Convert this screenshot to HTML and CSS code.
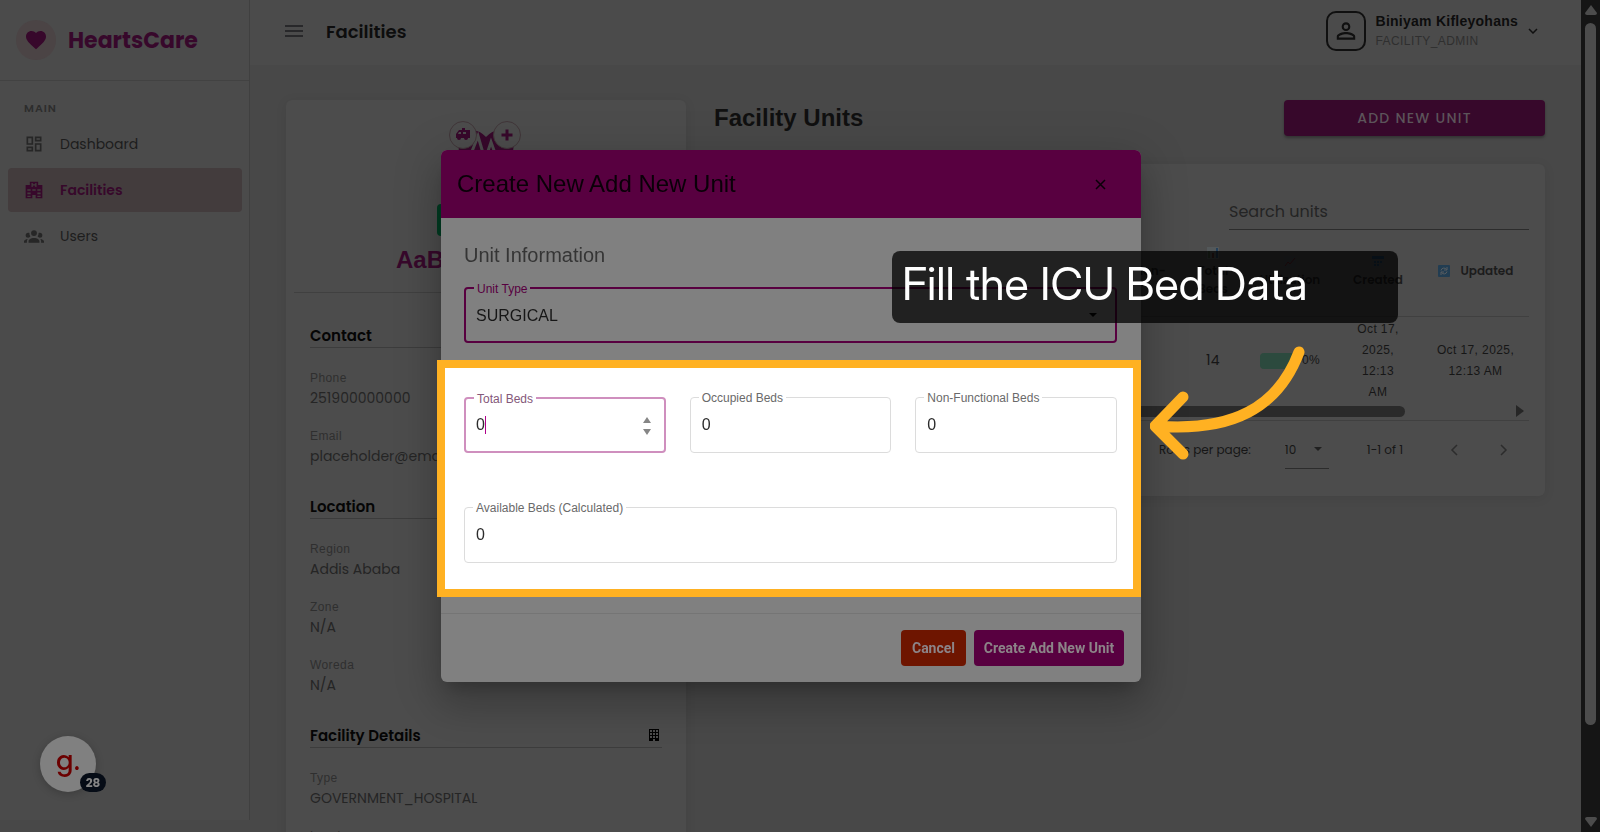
FILE: index.html
```html
<!DOCTYPE html>
<html lang="en">
<head>
<meta charset="UTF-8">
<meta name="viewport" content="width=device-width, initial-scale=1.0">
<title>HeartsCare - Facilities</title>
<link rel="stylesheet" href="styles.css">
</head>
<body>
<div class="app">
    <!-- Sidebar -->
    <aside class="sidebar">
        <div class="brand">
            <span class="brand-icon">
                <svg width="24" height="24" viewBox="0 0 24 24"><path d="M12 21.35l-1.45-1.32C5.4 15.36 2 12.28 2 8.5 2 5.42 4.42 3 7.5 3c1.74 0 3.41.81 4.5 2.09C13.09 3.81 14.76 3 16.5 3 19.58 3 22 5.42 22 8.5c0 3.78-3.4 6.86-8.55 11.54L12 21.35z"/></svg>
            </span>
            <span class="brand-name">HeartsCare</span>
        </div>
        <nav class="nav">
            <p class="nav-title">MAIN</p>
            <a href="#" class="nav-item">
                <svg width="20" height="20" viewBox="0 0 24 24"><path d="M19 5v2h-4V5h4M9 5v6H5V5h4m10 8v6h-4v-6h4M9 17v2H5v-2h4M21 3h-8v6h8V3zM11 3H3v10h8V3zm10 8h-8v10h8V11zm-10 4H3v6h8v-6z"/></svg>
                <span>Dashboard</span>
            </a>
            <a href="#" class="nav-item active">
                <svg width="20" height="20" viewBox="0 0 24 24"><path fill-rule="evenodd" d="M7 2h10v4h5v16h-8v-4h-4v4H2V6h5V2zm2 1.500v5h1.500V6.700h3v1.800H15v-5h-1.500v1.700h-3V3.500H9zM4 11v2h4v-2H4zm6 0v2h4v-2h-4zm6 0v2h4v-2h-4zM4 15v2h4v-2H4zm12 0v2h4v-2h-4zM4 19v1.500h4V19H4zm12 0v1.500h4V19h-4z"/></svg>
                <span>Facilities</span>
            </a>
            <a href="#" class="nav-item">
                <svg width="20" height="20" viewBox="0 0 24 24"><path d="M12 5a3.500 3.500 0 1 1 0 7 3.500 3.500 0 0 1 0-7zM5 8c.56 0 1.080.15 1.530.42-.15 1.430.27 2.850 1.130 3.960C7.160 13.340 6.160 14 5 14a3 3 0 0 1 0-6zm14 0a3 3 0 0 1 0 6c-1.160 0-2.160-.66-2.660-1.620.86-1.110 1.280-2.530 1.130-3.960.45-.27.970-.42 1.530-.42zM5.500 18.250c0-2.070 2.910-3.750 6.500-3.750s6.500 1.680 6.500 3.750V20h-13v-1.750zM0 20v-1.500c0-1.390 1.890-2.560 4.450-2.900-.59.68-.95 1.620-.95 2.650V20H0zm24 0h-3.500v-1.750c0-1.030-.36-1.970-.95-2.650 2.560.34 4.450 1.510 4.450 2.900V20z"/></svg>
                <span>Users</span>
            </a>
        </nav>
    </aside>

    <main class="main">
        <header class="topbar">
            <button class="menu-btn" aria-label="Menu">
                <svg width="18" height="12" viewBox="0 0 18 12"><path d="M0 0h18v2H0zM0 5h18v2H0zM0 10h18v2H0z"/></svg>
            </button>
            <h1>Facilities</h1>
            <div class="user">
                <span class="avatar">
                    <svg width="26" height="26" viewBox="0 0 24 24"><path d="M12 4a4 4 0 1 1 0 8 4 4 0 0 1 0-8m0 1.900a2.100 2.100 0 1 0 0 4.200 2.100 2.100 0 0 0 0-4.200M12 13c2.670 0 8.500 1.340 8.500 4v3h-17v-3c0-2.660 5.830-4 8.500-4m0 1.900c-2.970 0-6.600 1.460-6.600 2.100v1.100h13.200V17c0-.64-3.630-2.100-6.600-2.100z"/></svg>
                </span>
                <div class="user-text">
                    <strong>Biniyam Kifleyohans</strong>
                    <span>FACILITY_ADMIN</span>
                </div>
                <svg class="chevron" width="10" height="6" viewBox="0 0 10 6"><path d="M1 1l4 4 4-4"/></svg>
            </div>
        </header>

        <div class="content">
            <!-- Facility profile -->
            <section class="card profile">
                <svg class="logo" width="74" height="72" viewBox="0 0 74 72">
                    <path class="fill" d="M10 22Q22 2 37 17Q52 2 64 22Q68 44 37 66Q6 44 10 22z"/>
                    <path class="pulse" d="M12 34h10l7-18 7 24 6-18 5 14h16"/>
                    <circle cx="14" cy="15" r="13.500"/>
                    <circle cx="58" cy="15" r="13.500"/>
                    <path class="fill" fill-rule="evenodd" d="M7 17v-3l3-4h3V8h3v2h5v8h-2a2 2 0 0 1-4 0h-3a2 2 0 0 1-4 0H7zM10 12l-1 2h3v-2zM14 12v2h3v-2zM56.500 9.500h3v4h4v3h-4v4h-3v-4h-4v-3h4z"/>
                </svg>
                <span class="chip"></span>
                <h2>AaBET Hospital</h2>
                <hr>
                <h3>Contact</h3>
                <dl>
                    <div><dt>Phone</dt><dd>251900000000</dd></div>
                    <div><dt>Email</dt><dd>placeholder@email.com</dd></div>
                </dl>
                <h3>Location</h3>
                <dl>
                    <div><dt>Region</dt><dd>Addis Ababa</dd></div>
                    <div><dt>Zone</dt><dd>N/A</dd></div>
                    <div><dt>Woreda</dt><dd>N/A</dd></div>
                </dl>
                <h3>Facility Details
                    <svg width="10" height="12" viewBox="0 0 10 12"><path fill-rule="evenodd" d="M0 0h10v12H6v-2H4v2H0zM1 1v2h2V1zm3 0v2h2V1zm3 0v2h2V1zM1 4v2h2V4zm3 0v2h2V4zm3 0v2h2V4zM1 7v2h2V7zm3 0v2h2V7zm3 0v2h2V7z"/></svg>
                </h3>
                <dl>
                    <div><dt>Type</dt><dd>GOVERNMENT_HOSPITAL</dd></div>
                    <div><dt>Level</dt><dd>N/A</dd></div>
                </dl>
            </section>

            <!-- Units table -->
            <section class="units">
                <div class="units-head">
                    <h2>Facility Units</h2>
                    <button class="add-btn">ADD NEW UNIT</button>
                </div>
                <div class="card units-card">
                    <input class="search" type="text" placeholder="Search units" aria-label="Search units">
                    <table>
                        <colgroup>
                            <col>
                            <col class="w-non">
                            <col class="w-total">
                            <col class="w-util">
                            <col class="w-created">
                            <col class="w-updated">
                        </colgroup>
                        <thead>
                            <tr>
                                <th></th>
                                <th>Non-</th>
                                <th>
                                    <svg width="12" height="12" viewBox="0 0 12 12"><path fill="#53585a" d="M0 0h12v12H0z"/><path fill="#3c4a36" d="M1 4h2v7H1z"/><path fill="#4c2c28" d="M5 6h2v5H5z"/><path fill="#24405a" d="M9 1h2v10H9z"/></svg><br>Total<br>Beds
                                </th>
                                <th>
                                    <svg width="12" height="12" viewBox="0 0 12 12"><path fill="#474b4d" d="M0 0h12v12H0z"/><path fill="none" stroke="#5a2026" d="M1 10l3-4 2 2 5-6"/></svg><br>Utilization
                                </th>
                                <th>
                                    <svg width="12" height="12" viewBox="0 0 12 12"><path fill="#474b4d" d="M0 0h12v12H0z"/><path fill="#1c3c56" d="M0 0h12v3H0zM2 5h2v2H2zM5 5h2v2H5zM8 5h2v2H8zM2 8h2v2H2zM5 8h2v2H5z"/></svg><br>Created
                                </th>
                                <th class="inline">
                                    <svg width="12" height="12" viewBox="0 0 12 12"><rect width="12" height="12" rx="1" fill="#223d52"/><path fill="none" stroke="#585d60" d="M3 5.500a3 3 0 0 1 5.500-1M9 6.500a3 3 0 0 1-5.500 1M9 2v3H6M3 10V7h3"/></svg>
                                    <span>Updated</span>
                                </th>
                            </tr>
                        </thead>
                        <tbody>
                            <tr>
                                <td></td>
                                <td></td>
                                <td class="num">14</td>
                                <td><div class="util"><span class="bar"></span>0%</div></td>
                                <td>Oct 17,<br>2025,<br>12:13<br>AM</td>
                                <td>Oct 17, 2025,<br>12:13 AM</td>
                            </tr>
                        </tbody>
                    </table>
                    <div class="hscroll">
                        <span class="hscroll-thumb"></span>
                        <svg width="9" height="12" viewBox="0 0 9 12"><path d="M1 0l8 6-8 6z"/></svg>
                    </div>
                    <div class="pager">
                        <label for="rows">Rows per page:</label>
                        <div class="rows">
                            <select id="rows"><option>10</option></select>
                            <svg width="8" height="4" viewBox="0 0 8 4"><path d="M0 0h8L4 4z"/></svg>
                        </div>
                        <span class="range">1-1 of 1</span>
                        <button aria-label="Previous page"><svg width="8" height="12" viewBox="0 0 8 12"><path d="M7 1L2 6l5 5"/></svg></button>
                        <button aria-label="Next page"><svg width="8" height="12" viewBox="0 0 8 12"><path d="M1 1l5 5-5 5"/></svg></button>
                    </div>
                </div>
            </section>
        </div>
    </main>

    <!-- Window scrollbar -->
    <div class="vscroll">
        <svg width="12" height="10" viewBox="0 0 12 10"><path d="M6 0l6 8q0 2-2 2H2Q0 10 0 8z"/></svg>
        <span></span>
        <svg width="12" height="10" viewBox="0 0 12 10"><path d="M6 10l6-8q0-2-2-2H2Q0 0 0 2z"/></svg>
    </div>
</div>

<!-- Create unit dialog -->
<div class="backdrop">
    <form class="modal" role="dialog" aria-label="Create New Add New Unit">
        <div class="modal-head">
            <h2>Create New Add New Unit</h2>
            <button type="button" aria-label="Close">
                <svg width="11" height="11" viewBox="0 0 11 11"><path d="M1 1l9 9M10 1l-9 9"/></svg>
            </button>
        </div>
        <div class="modal-intro">
            <h3>Unit Information</h3>
            <div class="field focused">
                <label for="unit-type">Unit Type</label>
                <select id="unit-type"><option>SURGICAL</option></select>
                <svg class="arrow" width="8" height="4" viewBox="0 0 8 4"><path d="M0 0h8L4 4z"/></svg>
            </div>
        </div>
        <div class="spotlight">
            <div class="field fading">
                <label for="total">Total Beds</label>
                <input id="total" type="text" value="0">
                <span class="caret"></span>
                <svg class="spinner" width="8" height="18" viewBox="0 0 8 18"><path d="M4 0l4 6H0zM4 18l4-6H0z"/></svg>
            </div>
            <div class="field">
                <label for="occupied">Occupied Beds</label>
                <input id="occupied" type="text" value="0">
            </div>
            <div class="field">
                <label for="broken">Non-Functional Beds</label>
                <input id="broken" type="text" value="0">
            </div>
            <div class="field wide">
                <label for="available">Available Beds (Calculated)</label>
                <input id="available" type="text" value="0" readonly>
            </div>
        </div>
        <div class="modal-foot">
            <button type="button" class="cancel">Cancel</button>
            <button type="button" class="create">Create Add New Unit</button>
        </div>

        <!-- Step hint over the dialog -->
        <div class="hint">Fill the ICU Bed Data</div>
        <svg class="hint-arrow" width="160" height="120" viewBox="0 0 160 120"><path d="M149 12C128 68 82 92 6 86M33 57L5 86l28 28"/></svg>
    </form>
</div>

<div class="guide">
    <span class="guide-logo">g.</span>
    <span class="guide-count">28</span>
</div>
</body>
</html>
```

FILE: styles.css
```css
* {
    box-sizing: border-box;
}

body {
    margin: 0;
    font-family: "Poppins", "Inter", sans-serif;
    font-size: 14px;
    color: #1c1c1c;
    background: #484848;
    overflow: hidden;
}

h1, h2, h3, p, dl, dd {
    margin: 0;
}

button {
    font: inherit;
    border: none;
    padding: 0;
    background: none;
    cursor: pointer;
}

input, select {
    font: inherit;
    color: inherit;
    border: none;
    outline: none;
    background: none;
    appearance: none;
}

.app {
    display: flex;
    height: 100vh;
    overflow: hidden;
}

/* Sidebar */
.sidebar {
    width: 250px;
    flex-shrink: 0;
    margin-bottom: 12px;
    background: #4b4b4b;
    border-right: 1px solid #404040;
}

.brand {
    display: flex;
    align-items: center;
    gap: 12px;
    height: 81px;
    padding: 0 16px;
    border-bottom: 1px solid #424242;
}

.brand-icon {
    display: flex;
    align-items: center;
    justify-content: center;
    width: 40px;
    height: 40px;
    border-radius: 50%;
    background: #4b4445;
}

.brand-icon svg {
    fill: #37082b;
}

.brand-name {
    font-size: 22px;
    font-weight: 700;
    color: #37082b;
}

.nav {
    padding: 19px 7px 0 8px;
}

.nav-title {
    padding: 0 16px;
    margin-bottom: 6px;
    font-size: 11px;
    line-height: 16px;
    font-weight: 600;
    letter-spacing: 1px;
    color: #2d2d2d;
}

.nav-item {
    display: flex;
    align-items: center;
    gap: 16px;
    height: 44px;
    padding: 0 16px;
    margin-bottom: 2px;
    border-radius: 4px;
    color: #1d1d1d;
    text-decoration: none;
}

.nav-item svg {
    fill: #262626;
}

.nav-item.active {
    background: #433c3d;
    color: #37082b;
    font-weight: 600;
}

.nav-item.active svg {
    fill: #37082b;
}

/* Top bar */
.main {
    flex: 1;
    min-width: 0;
}

.topbar {
    display: flex;
    align-items: center;
    height: 65px;
    padding: 0 43px 3px 35px;
    background: #4b4b4b;
}

.menu-btn svg {
    display: block;
    fill: #28282a;
}

.topbar h1 {
    margin-left: 23px;
    font-size: 18px;
    font-weight: 600;
    color: #0d0d0d;
}

.user {
    display: flex;
    align-items: center;
    gap: 10px;
    margin-left: auto;
    font-family: "Liberation Sans", Arial, sans-serif;
}

.avatar {
    display: flex;
    align-items: center;
    justify-content: center;
    width: 40px;
    height: 40px;
    border: 2px solid #101010;
    border-radius: 10px;
}

.avatar svg {
    fill: #101010;
}

.user-text {
    display: flex;
    flex-direction: column;
    line-height: 20px;
}

.user-text strong {
    letter-spacing: 0.25px;
    color: #0d0d0d;
}

.user-text span {
    font-size: 12px;
    letter-spacing: 0.4px;
    color: #2f2f2f;
}

.chevron {
    fill: none;
    stroke: #101010;
    stroke-width: 1.5;
}

/* Content */
.content {
    display: flex;
    gap: 28px;
    padding: 35px 36px 0;
}

.card {
    background: #4c4c4c;
    border-radius: 6px;
    box-shadow: 0 2px 12px rgba(0, 0, 0, 0.08);
}

.profile {
    display: flex;
    flex-direction: column;
    width: 400px;
    flex-shrink: 0;
    padding: 20px 24px;
}

.logo {
    align-self: center;
}

.logo .fill {
    fill: #37082b;
}

.logo .pulse {
    fill: none;
    stroke: #4c4c4c;
    stroke-width: 3;
}

.logo circle {
    fill: #4c4c4c;
    stroke: #413639;
}

.chip {
    align-self: center;
    width: 98px;
    height: 32px;
    margin-top: 12px;
    border-radius: 4px;
    background: #003c22;
}

.profile h2 {
    font-family: "Liberation Sans", Arial, sans-serif;
    font-size: 24px;
    line-height: 48px;
    text-align: center;
    color: #37082b;
}

.profile hr {
    width: calc(100% + 32px);
    margin: 8px -16px 4px;
    border: none;
    border-top: 1px solid #404040;
}

.profile h3 {
    display: flex;
    align-items: center;
    justify-content: space-between;
    height: 25px;
    margin: 26px 0 21px;
    padding-right: 3px;
    border-bottom: 1px solid #3c3c3c;
    font-size: 15px;
    font-weight: 600;
    color: #050505;
}

.profile dl {
    display: flex;
    flex-direction: column;
    gap: 17px;
}

.profile dl + h3 {
    margin-top: 26px;
}

.profile dt {
    font-family: "Liberation Sans", Arial, sans-serif;
    font-size: 12px;
    line-height: 18px;
    letter-spacing: 0.4px;
    color: #2f2f2f;
}

.profile dd {
    line-height: 23px;
    color: #252525;
}

/* Units */
.units {
    flex: 1;
    min-width: 0;
}

.units-head {
    display: flex;
    align-items: center;
    justify-content: space-between;
    height: 36px;
    margin-bottom: 28px;
}

.units-head h2 {
    font-family: "Liberation Sans", Arial, sans-serif;
    font-size: 24px;
    color: #101010;
}

.add-btn {
    width: 261px;
    height: 36px;
    border-radius: 4px;
    background: #37082b;
    color: #5c545a;
    font-weight: 500;
    letter-spacing: 1.25px;
    box-shadow: 0 2px 3px rgba(0, 0, 0, 0.3);
}

.units-card {
    padding: 30px 16px 27px;
}

.search {
    display: block;
    width: 300px;
    height: 36px;
    margin-left: auto;
    padding: 0;
    border-bottom: 1px solid #2c2c2c;
    font-size: 16px;
}

.search::placeholder {
    color: #242424;
    opacity: 1;
}

table {
    width: 100%;
    table-layout: fixed;
    border-collapse: collapse;
    text-align: center;
}

.w-non { width: 60px; }
.w-total { width: 66px; }
.w-util { width: 88px; }
.w-created { width: 88px; }
.w-updated { width: 107px; }

th, td {
    padding: 0;
    white-space: nowrap;
}

th {
    height: 86px;
    padding-bottom: 4px;
    border-bottom: 1px solid #404040;
    font-size: 12px;
    line-height: 18px;
    font-weight: 600;
    color: #1c1c1c;
}

th svg {
    vertical-align: middle;
}

th.inline span {
    margin-left: 8px;
}

td {
    height: 86px;
    padding-top: 2px;
    font-family: "Liberation Sans", Arial, sans-serif;
    font-size: 12px;
    line-height: 21px;
    letter-spacing: 0.4px;
    color: #161616;
}

td.num {
    font-family: "Poppins", "Inter", sans-serif;
    font-size: 14px;
}

.util {
    display: flex;
    align-items: center;
    justify-content: center;
    gap: 4px;
}

.bar {
    width: 38px;
    height: 16px;
    border-radius: 4px;
    background: #2c4a3e;
}

.hscroll {
    display: flex;
    align-items: center;
    justify-content: space-between;
    height: 18px;
    padding-right: 5px;
    border-bottom: 1px solid #404040;
}

.hscroll-thumb {
    width: 85%;
    height: 11px;
    border-radius: 6px;
    background: #2a2a2a;
}

.hscroll svg {
    fill: #262626;
}

.pager {
    display: flex;
    align-items: center;
    justify-content: flex-end;
    height: 48px;
    padding: 10px 21px 0 0;
    font-size: 12px;
    color: #161616;
}

.rows {
    display: flex;
    align-items: center;
    width: 44px;
    height: 38px;
    margin: 0 38px 0 34px;
    border-bottom: 1px solid #2c2c2c;
}

.rows select {
    width: 29px;
    padding: 0;
}

.rows svg {
    fill: #202020;
}

.pager button {
    margin-left: 42px;
}

.range + button {
    margin-left: 47px;
}

.pager button svg {
    display: block;
    fill: none;
    stroke: #2c2c2c;
    stroke-width: 1.5;
}

/* Window scrollbar */
.vscroll {
    display: flex;
    flex-direction: column;
    align-items: center;
    justify-content: space-between;
    width: 19px;
    padding: 5px 0;
    background: #151515;
}

.vscroll svg {
    fill: #4c4c4c;
}

.vscroll span {
    width: 11px;
    flex: 1;
    margin: 8px 0 92px;
    border-radius: 6px;
    background: #4c4c4c;
}

/* Dialog */
.backdrop {
    position: fixed;
    inset: 0 18px 0 0;
    display: flex;
    align-items: center;
    justify-content: center;
    font-family: "Liberation Sans", Arial, sans-serif;
}

.modal {
    position: relative;
    width: 700px;
    border-radius: 6px;
    background: #808080;
    box-shadow: 0 11px 15px -7px rgba(0, 0, 0, 0.2), 0 24px 38px 3px rgba(0, 0, 0, 0.14), 0 9px 46px 8px rgba(0, 0, 0, 0.12);
}

.modal-head {
    display: flex;
    align-items: center;
    justify-content: space-between;
    height: 68px;
    padding: 0 35px 0 16px;
    border-radius: 6px 6px 0 0;
    background: #580040;
    color: #0a0008;
}

.modal-head h2 {
    font-size: 24px;
    font-weight: 400;
}

.modal-head svg {
    display: block;
    fill: none;
    stroke: #0a0008;
    stroke-width: 1.5;
}

.modal-intro {
    padding: 21px 24px 17px 23px;
}

.modal-intro h3 {
    margin-bottom: 16px;
    font-size: 20px;
    line-height: 32px;
    font-weight: 400;
    color: #353535;
}

.field {
    position: relative;
    height: 56px;
    border: 1px solid #dcdcdc;
    border-radius: 4px;
    color: #2c2c2c;
}

.field label {
    position: absolute;
    top: -7px;
    left: 8px;
    padding: 0 3px;
    background: #fff;
    font-size: 12px;
    line-height: 14px;
    color: #6a6a6a;
}

.field input, .field select {
    width: 100%;
    height: 100%;
    padding: 0 11px;
    font-size: 16px;
}

.field.focused {
    border: 2px solid #580040;
    color: #161616;
}

.field.focused label {
    background: #808080;
    color: #580040;
}

.field.focused select {
    padding: 0 10px;
}

.field .arrow {
    position: absolute;
    right: 18px;
    top: 24px;
}

.field.fading {
    border: 2px solid #cf8fbe;
}

.field.fading input {
    padding: 0 10px;
}

.field.fading label {
    color: #84587a;
}

.caret {
    position: absolute;
    top: 17px;
    left: 19px;
    width: 1px;
    height: 18px;
    background: #b0008a;
}

.spinner {
    position: absolute;
    top: 18px;
    right: 13px;
    fill: #868686;
}

/* Highlighted step of the guide */
.spotlight {
    display: grid;
    grid-template-columns: repeat(3, 1fr);
    gap: 54px 24px;
    margin-left: -4px;
    padding: 29px 16px 26px 19px;
    border: 8px solid #ffb122;
    background: #fff;
}

.field.wide {
    grid-column: 1 / -1;
}

.modal-foot {
    display: flex;
    justify-content: flex-end;
    gap: 8px;
    margin-top: 16px;
    padding: 16px 17px 16px 16px;
    border-top: 1px solid #757575;
}

.modal-foot button {
    height: 36px;
    border-radius: 4px;
    font-family: "Roboto", sans-serif;
    font-weight: 700;
    color: #8c8488;
}

.modal-foot .cancel {
    width: 65px;
    background: #6e1500;
}

.modal-foot .create {
    width: 150px;
    background: #580040;
}

.hint {
    position: absolute;
    top: 101px;
    left: 451px;
    width: 506px;
    height: 72px;
    padding-left: 10px;
    border-radius: 8px;
    background: rgba(0, 0, 0, 0.74);
    font-family: "Inter Display", "Inter", sans-serif;
    font-size: 45px;
    line-height: 66px;
    color: #fff;
}

.hint-arrow {
    position: absolute;
    top: 190px;
    left: 709px;
    fill: none;
    stroke: #ffb122;
    stroke-width: 11;
    stroke-linecap: round;
    stroke-linejoin: round;
}

/* Guide launcher */
.guide {
    position: fixed;
    left: 40px;
    bottom: 40px;
}

.guide-logo {
    display: block;
    width: 56px;
    height: 56px;
    border-radius: 50%;
    background: #808080;
    box-shadow: 0 2px 8px rgba(0, 0, 0, 0.2);
    font-size: 26px;
    line-height: 50px;
    font-weight: 500;
    text-align: center;
    color: #6b0000;
}

.guide-count {
    position: absolute;
    left: 40px;
    bottom: 0;
    width: 26px;
    height: 19px;
    border-radius: 10px;
    background: #060c16;
    font-size: 12px;
    line-height: 19px;
    font-weight: 700;
    text-align: center;
    color: #858585;
}
```
